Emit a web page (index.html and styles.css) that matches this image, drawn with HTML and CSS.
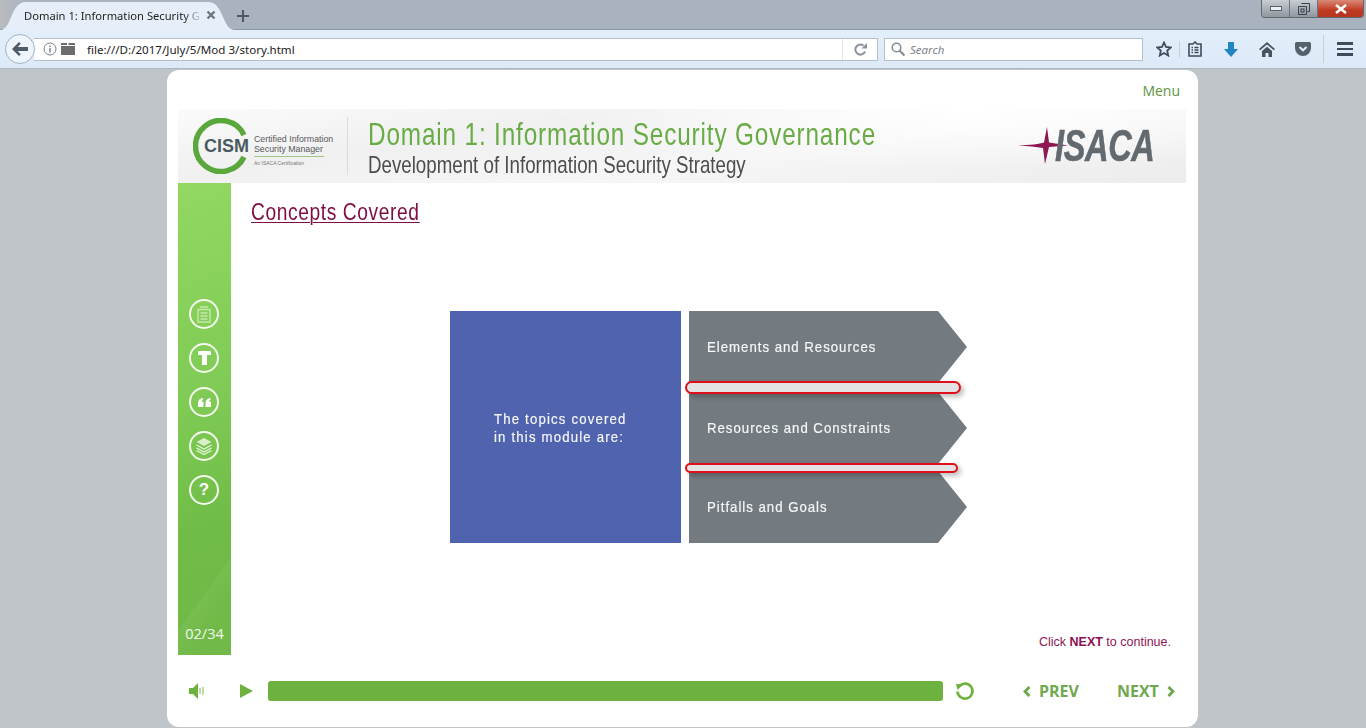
FILE: index.html
```html
<!DOCTYPE html>
<html lang="en">

<head>
    <meta charset="UTF-8">
    <meta name="viewport" content="width=device-width, initial-scale=1.0">
    <title>Domain 1: Information Security Governance</title>
    <link rel="stylesheet" href="styles.css">
</head>

<body>
    <div class="tab-strip">
        <div class="tab">
            <span class="tab-title">Domain 1: Information Security G</span>
            <svg class="tab-close" width="10" height="10" viewBox="0 0 10 10"><path d="M1.5 1.5l7 7M8.5 1.5l-7 7" stroke="#6f7780" stroke-width="2.4"/></svg>
        </div>
        <svg class="new-tab" width="12" height="12" viewBox="0 0 12 12"><path d="M6 0v12M0 6h12" stroke="#4f5964" stroke-width="2"/></svg>
        <div class="window-buttons">
            <div class="win-btn win-min"><svg width="12" height="6" viewBox="0 0 12 6"><rect x="0.5" y="0.5" width="11" height="4" fill="#eef1f4" stroke="#59626b"/></svg></div>
            <div class="win-btn win-max"><svg width="12" height="12" viewBox="0 0 12 12"><path d="M3.5 .5h8v8h-2M.5 3.5h8v8h-8z" fill="none" stroke="#39424b"/><rect x="3" y="6" width="3" height="3" fill="none" stroke="#39424b"/></svg></div>
            <div class="win-btn win-close"><svg width="14" height="10" viewBox="0 0 14 10"><path d="M2 1l10 8M12 1l-10 8" stroke="#fff" stroke-width="2.6"/></svg></div>
        </div>
    </div>

    <div class="toolbar">
        <div class="back-btn">
            <svg width="16" height="14" viewBox="0 0 16 14"><path d="M7 0l1.800 1.800L5.600 5H16v4H5.600l3.200 3.200L7 14 0 7z" fill="#4d5a68"/></svg>
        </div>
        <div class="url-box">
            <svg class="url-info" width="14" height="14" viewBox="0 0 14 14"><circle cx="7" cy="7" r="6" fill="none" stroke="#77808a"/><path d="M7 6v4.500M7 3.400v1.500" stroke="#77808a" stroke-width="1.400"/></svg>
            <svg class="url-folder" width="14" height="12" viewBox="0 0 14 12"><path d="M0 0h6v2H0zM7.500 0H14v2H7.500zM0 3h14v9H0z" fill="#6d6d6d"/></svg>
            <span class="url-text">file:///D:/2017/July/5/Mod 3/story.html</span>
            <span class="url-reload">
                <svg width="13" height="13" viewBox="0 0 13 13"><path d="M11 8.500A5 5 0 1 1 9.500 2.700" fill="none" stroke="#8b949c" stroke-width="2"/><path d="M7.500 5.500H13V0z" fill="#8b949c"/></svg>
            </span>
        </div>
        <div class="search-box">
            <svg width="14" height="14" viewBox="0 0 14 14"><circle cx="5.500" cy="5.500" r="4.300" fill="none" stroke="#858c93" stroke-width="1.600"/><path d="M8.500 8.500l5 5" stroke="#858c93" stroke-width="2.200"/></svg>
            <span>Search</span>
        </div>
        <div class="tool-icons">
            <svg class="tool-star" width="16" height="16" viewBox="0 0 16 16"><path d="M8 1.500l2 4.500 4.800.5-3.600 3.200 1 4.800L8 12l-4.200 2.500 1-4.800L1.200 6.500 6 6z" fill="none" stroke="#3f4b58" stroke-width="1.800"/></svg>
            <span class="tool-sep"></span>
            <svg class="tool-list" width="14" height="16" viewBox="0 0 14 16"><path d="M1 3h4l2-2 2 2h4v12H1z" fill="none" stroke="#3f4b58" stroke-width="1.600"/><path d="M3.500 6.500h1.500M6.500 6.500h4M3.500 9h1.500M6.500 9h4M3.500 11.500h1.500M6.500 11.500h4" stroke="#3f4b58" stroke-width="1.400"/></svg>
            <svg class="tool-down" width="14" height="15" viewBox="0 0 14 15"><path d="M4 0h6v7h4l-7 8-7-8h4z" fill="#1f86c4"/></svg>
            <svg class="tool-home" width="16" height="15" viewBox="0 0 16 15"><path d="M8 0l8 7-1.200 1.300L8 2.500 1.200 8.300 0 7zM3 9l5-4.300L13 9v6H9.500v-4h-3v4H3z" fill="#47535f"/></svg>
            <svg class="tool-pocket" width="16" height="14" viewBox="0 0 16 14"><path d="M1.500 0h13A1.500 1.500 0 0 1 16 1.500V6a8 8 0 0 1-16 0V1.500A1.500 1.500 0 0 1 1.500 0z" fill="#56616c"/><path d="M4.500 5L8 8.300 11.500 5" fill="none" stroke="#e4eefa" stroke-width="2"/></svg>
            <span class="tool-sep tool-sep-menu"></span>
            <div class="tool-menu"><i></i><i></i><i></i></div>
        </div>
    </div>

    <div class="page">
        <div class="player">
            <div class="player-top">Menu</div>

            <div class="banner">
                <div class="cism-logo">
                    <svg class="cism-ring" width="56" height="56" viewBox="0 0 56 56"><path d="M51 17A25.500 25.500 0 1 0 51 39" fill="none" stroke="#5aa83c" stroke-width="5.500"/></svg>
                    <span class="cism-word">CISM</span>
                    <div class="cism-side">
                        <span>Certified Information</span>
                        <span>Security Manager</span>
                        <i class="cism-rule"></i>
                        <small>An ISACA Certification</small>
                    </div>
                </div>
                <div class="banner-titles">
                    <h1>Domain 1: Information Security Governance</h1>
                    <h2>Development of Information Security Strategy</h2>
                </div>
                <div class="isaca-logo">
                    <svg width="50" height="40" viewBox="0 0 50 40"><path d="M0 19.500C12 19 22 18 26 16.500L29 1l2 15.500 19 3-19 1.500L27 38 25 22C18 21 10 20 0 19.500z" fill="#8e1550"/></svg>
                    <span>ISACA</span>
                </div>
            </div>

            <div class="stage">
                <div class="sidebar">
                    <div class="side-icons">
                        <div class="side-icon"><svg width="14" height="17" viewBox="0 0 14 17"><path d="M3 1h8M1 3.500h12v12.500H1zM3.500 7h7M3.500 10h7M3.500 13h7" fill="none" stroke="#c4e8ac" stroke-width="1.400"/></svg></div>
                        <div class="side-icon"><svg width="13" height="14" viewBox="0 0 13 14"><path d="M1 0h11a1 1 0 0 1 1 1v3h-4v10H4V4H0V1a1 1 0 0 1 1-1z" fill="#fff"/></svg></div>
                        <div class="side-icon"><svg width="13" height="9" viewBox="0 0 13 9"><path d="M5 0v2C4 2.300 3.500 3 3.500 3.800H5.500V9H0V5C0 2 2 .3 5 0zM12.500 0v2C11.500 2.300 11 3 11 3.800h2V9H7.500V5c0-3 2-4.700 5-5z" fill="#fff"/></svg></div>
                        <div class="side-icon"><svg width="18" height="18" viewBox="0 0 18 18"><path d="M9 1l7.500 4L9 9 1.500 5z" fill="#d8f0c8"/><path d="M1.500 8l7.500 4 7.500-4M1.500 11l7.500 4 7.500-4M1.500 13.500l7.500 4 7.500-4" fill="none" stroke="#e6f6da" stroke-width="1.300"/></svg></div>
                        <div class="side-icon side-help">?</div>
                    </div>
                    <div class="slide-count">02/34</div>
                </div>

                <div class="slide">
                    <div class="slide-title"><span>Concepts Covered</span></div>
                    <div class="diagram">
                        <div class="intro-box"><span class="squeezed">The topics covered<br>in this module are:</span></div>
                        <div class="arrows">
                            <div class="arrow"><span class="squeezed">Elements and Resources</span></div>
                            <div class="arrow"><span class="squeezed">Resources and Constraints</span></div>
                            <div class="arrow"><span class="squeezed">Pitfalls and Goals</span></div>
                            <div class="pill pill-one"></div>
                            <div class="pill pill-two"></div>
                        </div>
                    </div>
                    <div class="click-next">Click <b>NEXT</b> to continue.</div>
                </div>
            </div>

            <div class="controls">
                <svg class="ctl-volume" width="16" height="16" viewBox="0 0 16 16"><path d="M0 5h4l5-5v16l-5-5H0z" fill="#6db23f"/><path d="M11 5v6M14 4v8" stroke="#a9d38c" stroke-width="1.500"/></svg>
                <svg class="ctl-play" width="13" height="14" viewBox="0 0 13 14"><path d="M0 0l13 7-13 7z" fill="#6db23f"/></svg>
                <div class="progress"></div>
                <svg class="ctl-replay" width="20" height="20" viewBox="0 0 20 20"><path d="M4.500 5a7.500 7.500 0 1 1-2 5.500" fill="none" stroke="#6db23f" stroke-width="2.600"/><path d="M1 3l7 .5L2.500 9z" fill="#6db23f"/></svg>
                <div class="nav-btn nav-prev">
                    <svg width="8" height="11" viewBox="0 0 8 11"><path d="M6.500 1L2 5.500 6.500 10" fill="none" stroke="#6fa84f" stroke-width="3"/></svg>
                    PREV
                </div>
                <div class="nav-btn nav-next">
                    NEXT
                    <svg width="8" height="11" viewBox="0 0 8 11"><path d="M1.500 1L6 5.500 1.500 10" fill="none" stroke="#6fa84f" stroke-width="3"/></svg>
                </div>
            </div>
        </div>
    </div>
</body>

</html>
```

FILE: styles.css
```css
html,
body {
    margin: 0;
    padding: 0;
    height: 728px;
    overflow: hidden;
}

body {
    display: flex;
    flex-direction: column;
    font-family: "Open Sans", sans-serif;
    background-color: #c0c5c9;
}

/* browser chrome */
.tab-strip {
    height: 30px;
    display: flex;
    align-items: flex-start;
    background: linear-gradient(to right, #b9bcbf 0, #a9b3bf 30px, #a9b3bf 100%);
    border-bottom: 1px solid #8f99a3;
    box-sizing: border-box;
}

.tab {
    width: 235px;
    height: 28px;
    margin-top: 2px;
    padding: 0 0 2px 24px;
    box-sizing: border-box;
    display: flex;
    align-items: center;
    background-color: #e6eff9;
    clip-path: path("M0 28 C12 28 10 0 26 0 L208 0 C224 0 222 28 235 28 Z");
}

.tab-title {
    width: 182px;
    font-family: "Noto Sans", sans-serif;
    font-size: 11.2px;
    white-space: nowrap;
    color: #222;
    -webkit-mask-image: linear-gradient(to right, #000 160px, transparent 178px);
    mask-image: linear-gradient(to right, #000 160px, transparent 178px);
}

.new-tab {
    margin: 10px 0 0 2px;
}

.window-buttons {
    margin-left: auto;
    margin-right: 2px;
    display: flex;
    height: 17px;
    border: 1px solid #5f6771;
    border-top: none;
    border-radius: 0 0 4px 4px;
    overflow: hidden;
}

.win-btn {
    display: flex;
    align-items: center;
    justify-content: center;
    height: 17px;
}

.win-min,
.win-max {
    width: 27px;
    background: linear-gradient(to bottom, #c9ced3, #a5acb3 60%, #8f979f);
    border-right: 1px solid #6c747c;
}

.win-close {
    width: 45px;
    background: linear-gradient(to bottom, #d98a78, #c03a22 60%, #b7341f);
}

.toolbar {
    height: 39px;
    box-sizing: border-box;
    display: flex;
    align-items: center;
    padding: 0 0 0 5px;
    background: linear-gradient(to bottom, #e3eefb, #dde9f7);
    border-bottom: 1px solid #adb6be;
}

.back-btn {
    width: 30px;
    height: 30px;
    box-sizing: border-box;
    z-index: 1;
    display: flex;
    align-items: center;
    justify-content: center;
    background-color: #eef4fb;
    border: 1px solid #a5b2bf;
    border-radius: 50%;
}

.url-box {
    width: 844px;
    height: 23px;
    margin-left: -1px;
    box-sizing: border-box;
    display: flex;
    align-items: center;
    background-color: #fff;
    border: 1px solid #b4bfc9;
    border-left: none;
    font-family: "Noto Sans", sans-serif;
    font-size: 11.6px;
    color: #222;
}

.url-info {
    margin-left: 9px;
}

.url-folder {
    margin-left: 4px;
}

.url-text {
    margin-left: 12px;
}

.url-reload {
    margin-left: auto;
    width: 34px;
    height: 21px;
    display: flex;
    align-items: center;
    justify-content: center;
    border-left: 1px solid #e1e5e9;
}

.search-box {
    width: 259px;
    height: 23px;
    margin-left: 6px;
    padding-left: 6px;
    box-sizing: border-box;
    display: flex;
    align-items: center;
    gap: 5px;
    background-color: #fff;
    border: 1px solid #b4bfc9;
    font-family: "Noto Sans", sans-serif;
    font-style: italic;
    font-size: 11.5px;
    color: #7d848a;
}

.tool-icons {
    display: flex;
    align-items: center;
    margin-left: 13px;
}

.tool-sep {
    width: 1px;
    height: 17px;
    margin: 0 8px 0 7px;
    background-color: #c6d0da;
}

.tool-down {
    margin-left: 22px;
}

.tool-home {
    margin-left: 21px;
}

.tool-pocket {
    margin-left: 20px;
}

.tool-sep-menu {
    height: 28px;
    margin: 0 0 0 12px;
}

.tool-menu {
    margin-left: 13px;
    display: flex;
    flex-direction: column;
    gap: 3px;
}

.tool-menu i {
    display: block;
    width: 16px;
    height: 2.5px;
    background-color: #3f4b58;
}

/* player card */
.page {
    flex: 1;
    padding-top: 1px;
}

.player {
    width: 1031px;
    height: 657px;
    margin-left: 167px;
    padding: 0 12px 0 11px;
    box-sizing: border-box;
    background-color: #fff;
    border-radius: 12px;
    display: flex;
    flex-direction: column;
}

.player-top {
    height: 39px;
    padding: 11px 6px 0 0;
    box-sizing: border-box;
    text-align: right;
    font-size: 14px;
    line-height: 19px;
    color: #5d9440;
}

.banner {
    height: 74px;
    display: flex;
    align-items: center;
    background:
        radial-gradient(ellipse 420px 60px at 78% 0, #fff 0, rgba(255, 255, 255, 0) 100%),
        linear-gradient(172deg, #fbfbfb 0, #f0f0f0 30%, #f6f6f6 60%, #ececec 100%);
}

.cism-logo {
    width: 156px;
    height: 58px;
    margin-left: 14px;
    flex-shrink: 0;
    display: flex;
    align-items: center;
    position: relative;
    border-right: 1px solid #dcdcdc;
    box-sizing: border-box;
}

.cism-ring {
    position: absolute;
    left: 1px;
    top: 1px;
}

.cism-word {
    margin-left: 12px;
    font-family: "Liberation Sans", sans-serif;
    font-weight: bold;
    font-size: 18px;
    color: #4a5a62;
    position: relative;
}

.cism-side {
    margin-left: 5px;
    display: flex;
    flex-direction: column;
    font-family: "Liberation Sans", sans-serif;
    font-size: 8.8px;
    line-height: 10px;
    white-space: nowrap;
    color: #57595b;
    position: relative;
    top: 4px;
}

.cism-rule {
    width: 70px;
    height: 1px;
    margin: 2px 0 3px;
    background-color: #9cc78a;
}

.cism-side small {
    font-size: 5px;
    line-height: 7px;
    color: #777;
}

.banner-titles {
    flex: 1;
    min-width: 0;
    margin-left: 20px;
    padding-top: 2px;
    font-family: "Liberation Sans", sans-serif;
}

/* no condensed face installed, so the headings get squeezed */
.banner-titles h1 {
    margin: 0;
    font-size: 32px;
    font-weight: normal;
    line-height: 34px;
    letter-spacing: 1.12px;
    white-space: nowrap;
    color: #69ac45;
    transform: scaleX(0.76);
    transform-origin: left;
}

.banner-titles h2 {
    margin: 1px 0 0;
    font-size: 24px;
    font-weight: normal;
    line-height: 26px;
    white-space: nowrap;
    color: #4d4d4d;
    transform: scaleX(0.78);
    transform-origin: left;
}

.isaca-logo {
    width: 168px;
    display: flex;
    align-items: center;
    flex-shrink: 0;
}

.isaca-logo svg {
    flex-shrink: 0;
}

.isaca-logo span {
    margin-left: -13px;
    font-family: "Liberation Sans", sans-serif;
    font-style: italic;
    font-weight: bold;
    font-size: 44px;
    line-height: 40px;
    letter-spacing: -0.5px;
    color: #626a70;
    -webkit-text-stroke: 0.6px #626a70;
    transform: scaleX(0.74);
    transform-origin: left;
}

/* slide area */
.stage {
    height: 472px;
    display: flex;
}

.sidebar {
    width: 53px;
    display: flex;
    flex-direction: column;
    align-items: center;
    background:
        linear-gradient(125deg, rgba(255, 255, 255, 0) 82%, rgba(255, 255, 255, 0.05) 82%, rgba(255, 255, 255, 0) 90%),
        linear-gradient(160deg, #92d862 0, #7fcb55 45%, #6fbc46 72%, #71b948 100%);
}

.side-icons {
    margin-top: 116px;
    margin-right: 1px;
    display: flex;
    flex-direction: column;
    gap: 14px;
}

.side-icon {
    width: 30px;
    height: 30px;
    box-sizing: border-box;
    display: flex;
    align-items: center;
    justify-content: center;
    border: 2px solid #f2faec;
    border-radius: 50%;
}

.side-help {
    font-family: "Liberation Sans", sans-serif;
    font-weight: bold;
    font-size: 17px;
    color: #fff;
}

.slide-count {
    margin-top: auto;
    margin-bottom: 12px;
    font-size: 14.5px;
    line-height: 19px;
    color: #f2f8ec;
}

.slide {
    flex: 1;
    padding: 16px 15px 5px 20px;
    display: flex;
    flex-direction: column;
}

.slide-title {
    height: 26px;
    font-family: "Liberation Sans", sans-serif;
    font-size: 24px;
    line-height: 25px;
    letter-spacing: 0.75px;
    color: #7e0c45;
    white-space: nowrap;
    transform: scaleX(0.8);
    transform-origin: left;
}

.slide-title span {
    text-decoration: underline;
    text-decoration-thickness: 1px;
    text-underline-offset: 2px;
}

.diagram {
    margin: 86px 0 0 199px;
    display: flex;
    gap: 8px;
}

.squeezed {
    display: inline-block;
    font-family: "Liberation Sans", sans-serif;
    font-size: 15px;
    white-space: nowrap;
    color: #f6f7f7;
    -webkit-text-stroke: 0.2px #f6f7f7;
    transform: scaleX(0.88);
    transform-origin: left;
}

.intro-box {
    width: 231px;
    height: 232px;
    padding: 99px 0 0 44px;
    box-sizing: border-box;
    background-color: #5063ae;
    line-height: 18px;
}

.intro-box .squeezed {
    letter-spacing: 1.33px;
}

.arrows {
    width: 278px;
    height: 232px;
    position: relative;
    display: flex;
    flex-direction: column;
}

.arrow {
    height: 72px;
    flex-shrink: 0;
    box-sizing: border-box;
    padding: 0 0 2px 18px;
    display: flex;
    align-items: center;
    background-color: #737b80;
    clip-path: polygon(0 0, 249px 0, 100% 50%, 249px 100%, 0 100%);
}

.arrow + .arrow {
    margin-top: 9px;
}

.arrow:nth-child(3) {
    margin-top: 7px;
}

.arrow .squeezed {
    letter-spacing: 1.13px;
}

.pill {
    position: absolute;
    left: -4px;
    box-sizing: border-box;
    background-color: #e3e3e3;
    border: 2px solid #e0101a;
    border-radius: 7px;
    box-shadow: 3px 3px 5px rgba(0, 0, 0, 0.25);
}

.pill-one {
    top: 70px;
    width: 276px;
    height: 13px;
}

.pill-two {
    top: 152px;
    width: 273px;
    height: 10px;
}

.click-next {
    margin-top: auto;
    text-align: right;
    font-family: "Liberation Sans", sans-serif;
    font-size: 12.5px;
    line-height: 16px;
    color: #8e1556;
}

.click-next b {
    color: #8e0f4f;
}

/* bottom controls */
.controls {
    flex: 1;
    display: flex;
    align-items: center;
}

.ctl-volume {
    margin-left: 11px;
}

.ctl-play {
    margin-left: 35px;
}

.progress {
    width: 675px;
    height: 20px;
    margin-left: 15px;
    background-color: #6db23f;
    border-radius: 3px;
}

.ctl-replay {
    margin-left: 12px;
}

.nav-btn {
    display: flex;
    align-items: center;
    gap: 8px;
    font-weight: bold;
    font-size: 16px;
    color: #6fa84f;
}

.nav-prev {
    margin-left: 48px;
}

.nav-next {
    margin-left: 38px;
}
```
